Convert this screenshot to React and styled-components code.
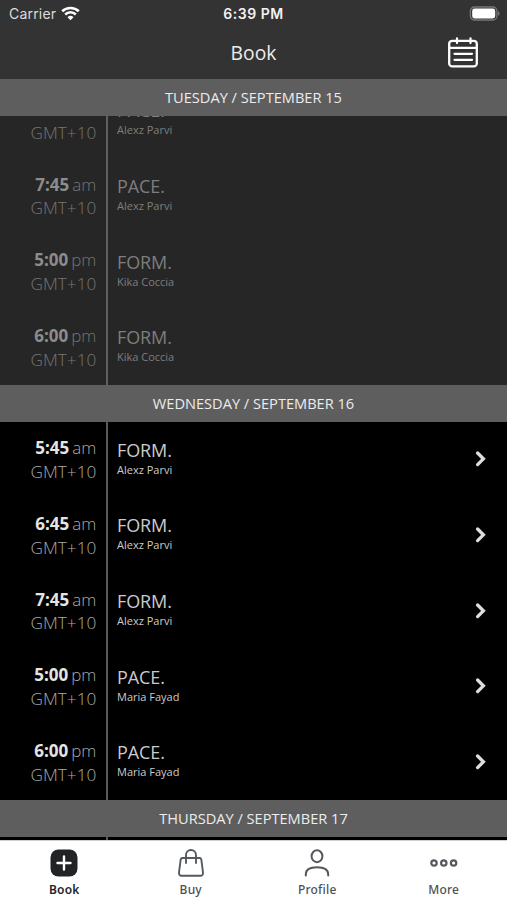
import React from "react";
import styled, { createGlobalStyle } from "styled-components";

const GlobalStyle = createGlobalStyle`
  * {
    box-sizing: border-box;
  }

  body {
    margin: 0;
    background-color: #000;
    font-family: "Open Sans", "Noto Sans", sans-serif;
  }
`;

const SCScreen = styled.div`
  display: flex;
  flex-direction: column;
  width: 507px;
  height: 900px;
  overflow: hidden;
  background-color: #000;
`;

const SCStatusBar = styled.div`
  display: grid;
  grid-template-columns: 1fr auto 1fr;
  align-items: center;
  flex: none;
  height: 27px;
  padding: 0 7px 0 9px;
  background-color: #333;
  color: #f2f2f2;
  font-family: Inter, sans-serif;
  font-size: 14px;
`;

const SCCarrier = styled.div`
  display: flex;
  align-items: center;
  gap: 5px;
  color: #dcdcdc;
  letter-spacing: 0.2px;

  svg {
    margin-top: -1px;
  }
`;

const SCClock = styled.div`
  font-weight: 600;
  letter-spacing: 0.5px;
  margin-right: 2px;
`;

const SCBattery = styled.div`
  display: flex;
  justify-content: flex-end;
`;

const SCNavBar = styled.header`
  display: grid;
  grid-template-columns: 1fr auto 1fr;
  align-items: center;
  flex: none;
  height: 52px;
  padding: 0 28px;
  background-color: #333;
`;

const SCTitle = styled.h1`
  grid-column: 2;
  margin: 0;
  color: #ececec;
  font-size: 19.3px;
  font-weight: 400;
  line-height: 50px;
`;

const SCCalendar = styled.div`
  display: flex;
  justify-content: flex-end;
`;

const SCSchedule = styled.main`
  flex: 1;
  min-height: 0;
  overflow: hidden;
`;

const SCDay = styled.h2`
  height: 36.5px;
  margin: 0;
  background-color: #5e5e5e;
  color: #ececec;
  font-size: 14.6px;
  font-weight: 400;
  line-height: 36.5px;
  text-align: center;
`;

const SCList = styled.div`
  display: flex;
  flex-direction: column;
  justify-content: flex-end;
  height: ${(props) => props.$height};
  overflow: hidden;
  background-color: ${(props) => (props.$past ? "#262626" : "#000")};
`;

const SCRow = styled.div`
  display: flex;
  flex: none;
  height: 75.7px;
  color: ${(props) => (props.$past ? "#7e7e7e" : "#cbcbcb")};
`;

const SCTimeColumn = styled.div`
  width: 108px;
  padding: 14.8px 9.7px 0 0;
  border-right: 2px solid ${(props) => (props.$past ? "#606060" : "#585858")};
  text-align: right;
`;

const SCTime = styled.div`
  height: 23.5px;
  color: ${(props) => (props.$past ? "#8c8c8c" : "#e4e4e4")};
  font-size: 17px;
  font-weight: 700;
  line-height: 23.5px;
`;

const SCPeriod = styled.span`
  margin-left: 3px;
  color: ${(props) => (props.$past ? "#757575" : "#aaa")};
  font-weight: 300;
`;

const SCZone = styled.div`
  color: ${(props) => (props.$past ? "#757575" : "#aaa")};
  font-size: 17.2px;
  font-weight: 300;
  line-height: 23.5px;
`;

const SCClass = styled.div`
  flex: 1;
  padding: 16px 0 0 9px;
`;

const SCClassName = styled.div`
  height: 25px;
  font-size: 18px;
  font-weight: 400;
  line-height: 25px;
  letter-spacing: -0.1px;
`;

const SCTeacher = styled.div`
  font-size: 11px;
  line-height: 14px;
`;

const SCArrow = styled.div`
  display: flex;
  align-items: center;
  padding-right: 20px;
`;

const SCTabBar = styled.nav`
  display: grid;
  grid-template-columns: repeat(4, 1fr);
  flex: none;
  height: 60px;
  padding-left: 1px;
  background-color: #fff;
  border-top: 1px solid #cfcfcf;
`;

const SCTab = styled.div`
  display: flex;
  flex-direction: column;
  align-items: center;
  padding-top: 8px;
  color: ${(props) => (props.$active ? "#222629" : "#4d5155")};
  font-family: "Noto Sans", sans-serif;
  font-size: 12px;
  font-weight: ${(props) => (props.$active ? 600 : 500)};
  line-height: 18px;
  letter-spacing: 0.2px;

  svg {
    margin-bottom: 4px;
  }
`;

const days = [
  {
    title: "TUESDAY / SEPTEMBER 15",
    past: true,
    height: "269.5px",
    classes: [
      { time: "6:45", period: "am", name: "PACE.", teacher: "Alexz Parvi" },
      { time: "7:45", period: "am", name: "PACE.", teacher: "Alexz Parvi" },
      { time: "5:00", period: "pm", name: "FORM.", teacher: "Kika Coccia" },
      { time: "6:00", period: "pm", name: "FORM.", teacher: "Kika Coccia" },
    ],
  },
  {
    title: "WEDNESDAY / SEPTEMBER 16",
    height: "378.5px",
    classes: [
      { time: "5:45", period: "am", name: "FORM.", teacher: "Alexz Parvi" },
      { time: "6:45", period: "am", name: "FORM.", teacher: "Alexz Parvi" },
      { time: "7:45", period: "am", name: "FORM.", teacher: "Alexz Parvi" },
      { time: "5:00", period: "pm", name: "PACE.", teacher: "Maria Fayad" },
      { time: "6:00", period: "pm", name: "PACE.", teacher: "Maria Fayad" },
    ],
  },
  {
    title: "THURSDAY / SEPTEMBER 17",
    height: "75.7px",
    classes: [{}],
  },
];

function WifiIcon() {
  return (
    <svg width="19" height="15" viewBox="0 0 19 15" fill="none">
      <path d="M1.2 5.3a12 12 0 0 1 16.6 0" stroke="#fff" strokeWidth="2.6" />
      <path d="M4.2 8.5a7.6 7.6 0 0 1 10.6 0" stroke="#fff" strokeWidth="2.5" />
      <path d="M9.5 14.3 6.5 11.2a4.3 4.3 0 0 1 6 0z" fill="#fff" />
    </svg>
  );
}

function BatteryIcon() {
  return (
    <svg width="31" height="16" viewBox="0 0 31 16" fill="none">
      <rect x="1.4" y="1" width="26.5" height="13" rx="4" stroke="#777" strokeWidth="1.3" />
      <rect x="3.2" y="2.6" width="23" height="9.8" rx="2.3" fill="#fff" />
      <path d="M29 5.3c2 .8 2 3.7 0 4.5z" fill="#777" />
    </svg>
  );
}

function CalendarIcon() {
  return (
    <svg width="32" height="32" viewBox="0 0 32 32" fill="none" stroke="#fff" strokeWidth="2.3" strokeLinecap="round">
      <rect x="2.2" y="3.8" width="27.6" height="25.6" rx="3" />
      <path d="M2.5 10.8h27M10 1.5v4.5M23.5 1.5v4.5" />
      <path d="M7.5 16.8h17.5M7.5 22.8h17.5" />
    </svg>
  );
}

function ArrowIcon() {
  return (
    <svg width="12" height="18" viewBox="0 0 12 18" fill="none">
      <path d="m2.6 3 5.8 5.8-5.8 5.8" stroke="#dedede" strokeWidth="3.3" strokeLinecap="round" />
    </svg>
  );
}

function BookIcon() {
  return (
    <svg width="28" height="28" viewBox="0 0 28 28">
      <rect x="0.5" y="0.5" width="27" height="27" rx="8" fill="#202427" />
      <path d="M14 7.5v13M7.5 14h13" stroke="#fff" strokeWidth="2.4" strokeLinecap="round" />
    </svg>
  );
}

function BuyIcon() {
  return (
    <svg width="28" height="28" viewBox="0 0 28 28" fill="none" stroke="#555a5e" strokeWidth="1.9" strokeLinecap="round">
      <path d="M5.5 9h17c1 0 1.6.5 1.8 1.5l1.7 13c.2 2-.8 3.2-2.6 3.2H4.6c-1.8 0-2.8-1.2-2.6-3.2l1.7-13C3.9 9.500 4.500 9 5.500 9z" />
      <path d="M9 14V6a5 5 0 0 1 10 0v8" />
    </svg>
  );
}

function ProfileIcon() {
  return (
    <svg width="28" height="28" viewBox="0 0 28 28" fill="none" stroke="#55595d" strokeWidth="2" strokeLinecap="round">
      <ellipse cx="14" cy="7.2" rx="5.4" ry="6" />
      <path d="M2.8 26.5v-1.3c0-5 4.5-7 11.2-7s11.2 2 11.2 7v1.3" />
    </svg>
  );
}

function MoreIcon() {
  return (
    <svg width="28" height="28" viewBox="0 0 28 28" fill="none" stroke="#55595d" strokeWidth="2.2">
      <circle cx="4" cy="14" r="2.7" />
      <circle cx="13.8" cy="14" r="2.7" />
      <circle cx="23.6" cy="14" r="2.7" />
    </svg>
  );
}

function ClassRow({ item, past }) {
  return (
    <SCRow $past={past}>
      <SCTimeColumn $past={past}>
        {item.time && (
          <>
            <SCTime $past={past}>
              {item.time}
              <SCPeriod $past={past}>{item.period}</SCPeriod>
            </SCTime>
            <SCZone $past={past}>GMT+10</SCZone>
          </>
        )}
      </SCTimeColumn>
      <SCClass>
        <SCClassName>{item.name}</SCClassName>
        <SCTeacher>{item.teacher}</SCTeacher>
      </SCClass>
      {item.time && !past && (
        <SCArrow>
          <ArrowIcon />
        </SCArrow>
      )}
    </SCRow>
  );
}

function App() {
  return (
    <SCScreen>
      <GlobalStyle />
      <SCStatusBar>
        <SCCarrier>
          Carrier <WifiIcon />
        </SCCarrier>
        <SCClock>6:39 PM</SCClock>
        <SCBattery>
          <BatteryIcon />
        </SCBattery>
      </SCStatusBar>
      <SCNavBar>
        <SCTitle>Book</SCTitle>
        <SCCalendar>
          <CalendarIcon />
        </SCCalendar>
      </SCNavBar>
      <SCSchedule>
        {days.map((day) => (
          <section key={day.title}>
            <SCDay>{day.title}</SCDay>
            <SCList $past={day.past} $height={day.height}>
              {day.classes.map((item, i) => (
                <ClassRow key={i} item={item} past={day.past} />
              ))}
            </SCList>
          </section>
        ))}
      </SCSchedule>
      <SCTabBar>
        <SCTab $active>
          <BookIcon />
          Book
        </SCTab>
        <SCTab>
          <BuyIcon />
          Buy
        </SCTab>
        <SCTab>
          <ProfileIcon />
          Profile
        </SCTab>
        <SCTab>
          <MoreIcon />
          More
        </SCTab>
      </SCTabBar>
    </SCScreen>
  );
}

export default App;
